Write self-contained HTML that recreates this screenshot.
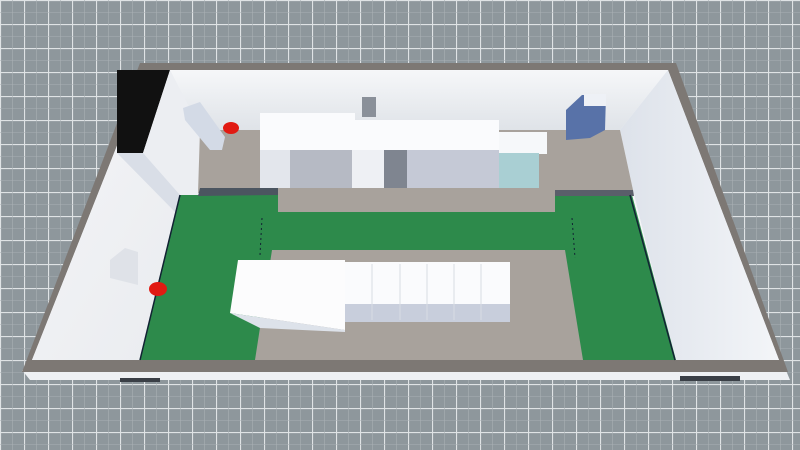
<!DOCTYPE html>
<html><head><style>
html,body{margin:0;padding:0;width:800px;height:450px;overflow:hidden;background:#8e979c}
svg{display:block}
</style></head><body>
<svg width="800" height="450" viewBox="0 0 800 450" xmlns="http://www.w3.org/2000/svg">
<defs>
<pattern id="g" width="24" height="24" patternUnits="userSpaceOnUse">
<rect width="24" height="24" fill="#8e979c"/>
<path d="M0 0.5H24M0.5 0V24" stroke="#dfe3e5" stroke-width="1.2"/>
<path d="M0 12.5H24M12.5 0V24" stroke="#a9b0b4" stroke-width="0.6"/>
</pattern>
<linearGradient id="bw" x1="0" y1="0" x2="0" y2="1"><stop offset="0" stop-color="#f6f7f9"/><stop offset="1" stop-color="#dfe3e8"/></linearGradient>
<linearGradient id="rw" x1="0" y1="0" x2="1" y2="0"><stop offset="0" stop-color="#dde2ea"/><stop offset="1" stop-color="#f3f5f8"/></linearGradient>
<linearGradient id="lw" x1="0" y1="0" x2="1" y2="1"><stop offset="0" stop-color="#f4f5f7"/><stop offset="1" stop-color="#e9ebef"/></linearGradient>
</defs>
<rect width="800" height="450" fill="url(#g)"/>
<polygon points="22,370 785,368 790,380 30,380" fill="#eef0f3"/>
<rect x="120" y="378" width="40" height="4" fill="#3a3f46"/>
<rect x="680" y="376" width="60" height="5" fill="#3a3f46"/>
<polygon points="140,63 676,63 788,372 22,372" fill="#7d7874"/>
<polygon points="147,70 668,70 779,360 32,360" fill="#f4f5f7"/>
<polygon points="170,70 668,70 620,130 200,130" fill="url(#bw)"/>
<polygon points="668,70 779,360 675,360 633,190 620,130" fill="url(#rw)"/>
<polygon points="147,70 170,70 200,130 198,193 140,360 32,360" fill="url(#lw)"/>
<polygon points="117,70 170,70 143,153 117,153" fill="#111"/>
<polygon points="170,70 200,128 200,205 195,212 143,153" fill="#eceef2"/>
<polygon points="117,153 143,153 195,212 178,215" fill="#d9dee7"/>
<polygon points="200,130 620,130 633,190 198,193" fill="#a8a29c"/>
<polygon points="180,195 632,195 676,360 140,360" fill="#2d8a4b"/>
<polygon points="200,188 278,188 278,195 198,196" fill="#4b5560"/>
<polygon points="553,190 633,190 634,196 553,196" fill="#5a5e6a"/>
<line x1="180" y1="195" x2="140" y2="360" stroke="#123" stroke-width="1.5"/>
<line x1="630" y1="195" x2="675" y2="360" stroke="#123" stroke-width="1.5"/>
<polygon points="278,188 555,188 555,212 278,212" fill="#a8a29c"/>
<polygon points="272,250 565,250 583,360 255,360" fill="#a8a29c"/>
<rect x="260" y="113" width="95" height="37" fill="#fafbfd"/>
<rect x="260" y="150" width="30" height="38" fill="#e3e6ec"/>
<rect x="290" y="150" width="62" height="38" fill="#b6bac4"/>
<rect x="352" y="120" width="55" height="30" fill="#fafbfd"/>
<rect x="352" y="150" width="32" height="38" fill="#eef0f4"/>
<rect x="384" y="150" width="24" height="38" fill="#7f8590"/>
<rect x="407" y="120" width="92" height="30" fill="#fafbfd"/>
<rect x="407" y="150" width="92" height="38" fill="#c5c9d6"/>
<rect x="499" y="132" width="48" height="22" fill="#f6f8fa"/>
<rect x="499" y="153" width="40" height="35" fill="#a9cfd3"/>
<rect x="362" y="97" width="14" height="20" fill="#8a9099"/>
<polygon points="183,108 200,102 225,137 222,150 210,150 185,120" fill="#d3dae6"/>
<polygon points="566,110 582,95 606,95 605,130 590,138 566,140" fill="#5872a8"/>
<rect x="584" y="94" width="22" height="12" fill="#eef1f6"/>
<ellipse cx="231" cy="128" rx="8" ry="6" fill="#e11a12"/>
<ellipse cx="158" cy="289" rx="9" ry="7" fill="#e11a12"/>
<polygon points="110,260 125,248 138,252 138,285 110,278" fill="#dfe2e8"/>
<polygon points="238,260 345,260 345,330 230,313" fill="#fcfcfd"/>
<polygon points="230,313 345,330 345,332 260,328" fill="#dde2ea"/>
<rect x="345" y="262" width="165" height="42" fill="#fafbfd"/>
<rect x="345" y="304" width="165" height="18" fill="#c8cedc"/>
<g stroke="#d8dce3" stroke-width="1"><line x1="372" y1="264" x2="372" y2="320"/><line x1="400" y1="264" x2="400" y2="320"/><line x1="427" y1="264" x2="427" y2="320"/><line x1="454" y1="264" x2="454" y2="320"/><line x1="481" y1="264" x2="481" y2="320"/></g>
<line x1="262" y1="218" x2="260" y2="255" stroke="#123" stroke-dasharray="2,3"/>
<line x1="572" y1="218" x2="575" y2="258" stroke="#123" stroke-dasharray="2,3"/>
</svg>
</body></html>
